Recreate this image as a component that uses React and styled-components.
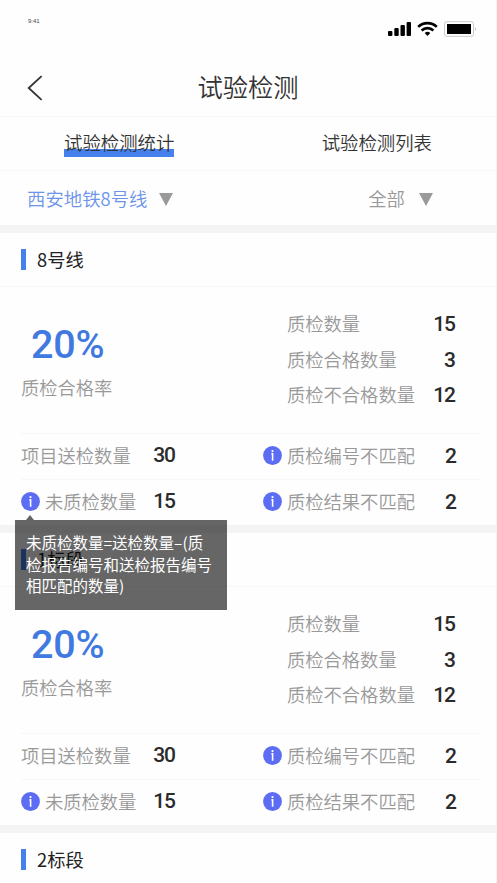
import React from 'react';
import styled, {createGlobalStyle} from 'styled-components';

const colors = {
    blue: '#4580ec',
    info: '#5c6df3',
    text: '#333',
    muted: '#999',
    line: '#f7f7f7',
    band: '#f4f4f4',
};

const GlobalStyle = createGlobalStyle`
    * {
        box-sizing: border-box;
    }

    body {
        margin: 0;
        background: #fff;
        font-family: "Noto Sans CJK SC", sans-serif;
        color: ${colors.text};
    }
`;

const Screen = styled.div`
    width: 497px;
    height: 883px;
    overflow: hidden;
    background: #fefefe;
    border-right: 1px solid #f3f3f3;
`;

const StatusBar = styled.div`
    display: flex;
    justify-content: space-between;
    height: 58px;
    padding: 17px 20px 0 28px;
`;

const Time = styled.span`
    font-family: "Liberation Sans", sans-serif;
    font-size: 6px;
    line-height: 9px;
    color: #444;
`;

const StatusIcons = styled.svg`
    display: block;
    margin-top: 4px;
`;

const NavBar = styled.div`
    display: grid;
    grid-template-columns: 60px 1fr 60px;
    align-items: center;
    height: 59px;
    border-bottom: 1px solid ${colors.line};
`;

const BackIcon = styled.svg`
    margin: 2px 0 0 27px;
`;

const Title = styled.h1`
    margin: 0;
    padding-bottom: 2px;
    font-size: 25.3px;
    font-weight: 350;
    line-height: 38px;
    text-align: center;
`;

const Tabs = styled.div`
    display: flex;
    height: 54px;
    padding: 0 64px;
    justify-content: space-between;
    align-items: center;
    border-bottom: 1px solid ${colors.line};
`;

const Tab = styled.span`
    height: 27px;
    font-size: 18.4px;
    font-weight: 350;
    line-height: 25px;
    white-space: nowrap;
    background: ${props => props.$active
        ? `linear-gradient(${colors.blue}, ${colors.blue}) 0 19px / 100% 8px no-repeat`
        : 'none'};
`;

const Filters = styled.div`
    display: flex;
    justify-content: space-between;
    align-items: center;
    height: 54px;
    padding: 0 63px 0 27px;
`;

const Filter = styled.div`
    display: flex;
    align-items: center;
    gap: ${props => props.$active ? 12 : 14}px;
    font-size: 18.4px;
    font-weight: 350;
    color: ${props => props.$active ? '#6d94e8' : colors.muted};
`;

const Arrow = styled.i`
    border: 7px solid transparent;
    border-top: 13px solid #999;
    border-bottom: 0;
    margin-top: 3px;
`;

const Card = styled.section`
    border-top: 8px solid ${colors.band};
`;

const CardTitle = styled.h2`
    display: flex;
    align-items: center;
    gap: 11px;
    height: 54px;
    margin: 0;
    padding-left: 21px;
    border-bottom: 1px solid ${colors.line};
    font-size: 18.3px;
    font-weight: 400;
    line-height: 24px;
    color: #222;

    &::before {
        content: '';
        width: 5px;
        height: 21px;
        background: ${colors.blue};
    }

    span {
        padding-bottom: 2px;
    }
`;

const Summary = styled.div`
    display: flex;
    justify-content: space-between;
    height: 146px;
    padding: 19px 41px 0 21px;
`;

const Rate = styled.div`
    padding-top: 14px;
`;

const RateValue = styled.div`
    padding-left: 10px;
    font-family: Roboto, sans-serif;
    font-size: 39.5px;
    font-weight: 500;
    line-height: 50px;
    letter-spacing: -0.2px;
    color: #4079e0;
`;

const Label = styled.span`
    font-size: 18.3px;
    font-weight: 350;
    line-height: 34px;
    padding-bottom: 2px;
    white-space: nowrap;
    color: ${colors.muted};
`;

const Value = styled.span`
    font-family: Roboto, sans-serif;
    font-size: 21px;
    font-weight: 500;
    line-height: 24px;
    letter-spacing: -1px;
    color: #2b2b2b;
`;

const Counts = styled.div`
    width: 168px;
`;

const Count = styled.div`
    display: flex;
    justify-content: space-between;
    align-items: center;
    height: 35.7px;
`;

const Details = styled.div`
    display: grid;
    grid-template-columns: 242px 1fr;
    grid-template-rows: 46px 46px;
    margin: 0 16px 0 21px;
`;

const Detail = styled.div`
    position: relative;
    display: flex;
    align-items: center;
    padding: 0 ${props => props.$right ? 24 : 88}px 2px 0;
    border-top: 1px solid ${colors.line};

    ${Value} {
        margin-left: auto;
        ${props => props.$right ? 'padding-top: 1px' : 'padding-bottom: 2px'};
    }
`;

const InfoIcon = styled.svg`
    flex: none;
    margin-right: 5px;
`;

const Tooltip = styled.div`
    position: absolute;
    z-index: 1;
    top: 40px;
    left: -6px;
    width: 212px;
    height: 90px;
    padding: 12px 0 0 11px;
    background: rgba(0, 0, 0, 0.6);
    font-size: 15.5px;
    line-height: 21.5px;
    white-space: nowrap;
    color: #fff;

    &::before {
        content: '';
        position: absolute;
        top: -5px;
        left: 11px;
        border: 4px solid transparent;
        border-top: 0;
        border-bottom: 5px solid #666;
    }
`;

const sections = [
    {name: '8号线', tooltip: true},
    {name: '1标段'},
    {name: '2标段', collapsed: true},
];

const counts = [
    ['质检数量', 15],
    ['质检合格数量', 3],
    ['质检不合格数量', 12],
];

const details = [
    {label: '项目送检数量', value: 30},
    {label: '质检编号不匹配', value: 2, info: true},
    {label: '未质检数量', value: 15, info: true, tooltip: true},
    {label: '质检结果不匹配', value: 2, info: true},
];

const Info = () => (
    <InfoIcon width="19" height="19" viewBox="0 0 19 19">
        <circle cx="9.5" cy="9.5" r="9.4" fill={colors.info}/>
        <circle cx="9.5" cy="5.1" r="1.1" fill="#fff"/>
        <path d="M8.4 7.9h1.2v6.8" fill="none" stroke="#fff" strokeWidth="1.6"/>
    </InfoIcon>
);

const SectionBody = ({tooltip}) => (
    <>
        <Summary>
            <Rate>
                <RateValue>20%</RateValue>
                <Label>质检合格率</Label>
            </Rate>
            <Counts>
                {counts.map(([label, value]) => (
                    <Count key={label}>
                        <Label>{label}</Label>
                        <Value>{value}</Value>
                    </Count>
                ))}
            </Counts>
        </Summary>
        <Details>
            {details.map((item, index) => (
                <Detail key={item.label} $right={index % 2 === 1}>
                    {item.info && <Info/>}
                    <Label>{item.label}</Label>
                    <Value>{item.value}</Value>
                    {tooltip && item.tooltip && (
                        <Tooltip>
                            未质检数量=送检数量–(质<br/>
                            检报告编号和送检报告编号<br/>
                            相匹配的数量)
                        </Tooltip>
                    )}
                </Detail>
            ))}
        </Details>
    </>
);

export default function App() {
    return (
        <Screen>
            <GlobalStyle/>
            <StatusBar>
                <Time>9:41</Time>
                <StatusIcons width="88" height="16" viewBox="0 0 88 16">
                    <rect x="0" y="10" width="4.4" height="5" rx="1"/>
                    <rect x="6.3" y="7" width="4.4" height="8" rx="1"/>
                    <rect x="12.5" y="4" width="4.4" height="11" rx="1"/>
                    <rect x="18.6" y="1" width="4.4" height="14" rx="1"/>
                    <g fill="none" stroke="#000" strokeWidth="2.6">
                        <path d="M30.2 5.9a13.4 13.4 0 0 1 18.6 0"/>
                        <path d="M33.6 9.5a8.5 8.5 0 0 1 11.8 0"/>
                    </g>
                    <path d="M36.7 12.1a4 4 0 0 1 5.6 0L39.5 15z"/>
                    <rect x="56.5" y=".7" width="29" height="14.6" rx="2" fill="#fff" stroke="#bbb" strokeWidth=".8"/>
                    <rect x="59" y="3" width="24" height="10"/>
                    <path d="M87 6v4q1.2-2 0-4z" fill="#888"/>
                </StatusIcons>
            </StatusBar>
            <NavBar>
                <BackIcon width="16" height="26" viewBox="0 0 16 26" fill="none" stroke="#333" strokeWidth="1.8">
                    <path d="M14.6 1.2 1.7 13l12.9 11.8"/>
                </BackIcon>
                <Title>试验检测</Title>
            </NavBar>
            <Tabs>
                <Tab $active>试验检测统计</Tab>
                <Tab>试验检测列表</Tab>
            </Tabs>
            <Filters>
                <Filter $active>西安地铁8号线<Arrow/></Filter>
                <Filter>全部<Arrow/></Filter>
            </Filters>
            {sections.map(({name, tooltip, collapsed}) => (
                <Card key={name}>
                    <CardTitle><span>{name}</span></CardTitle>
                    {!collapsed && <SectionBody tooltip={tooltip}/>}
                </Card>
            ))}
        </Screen>
    );
}
